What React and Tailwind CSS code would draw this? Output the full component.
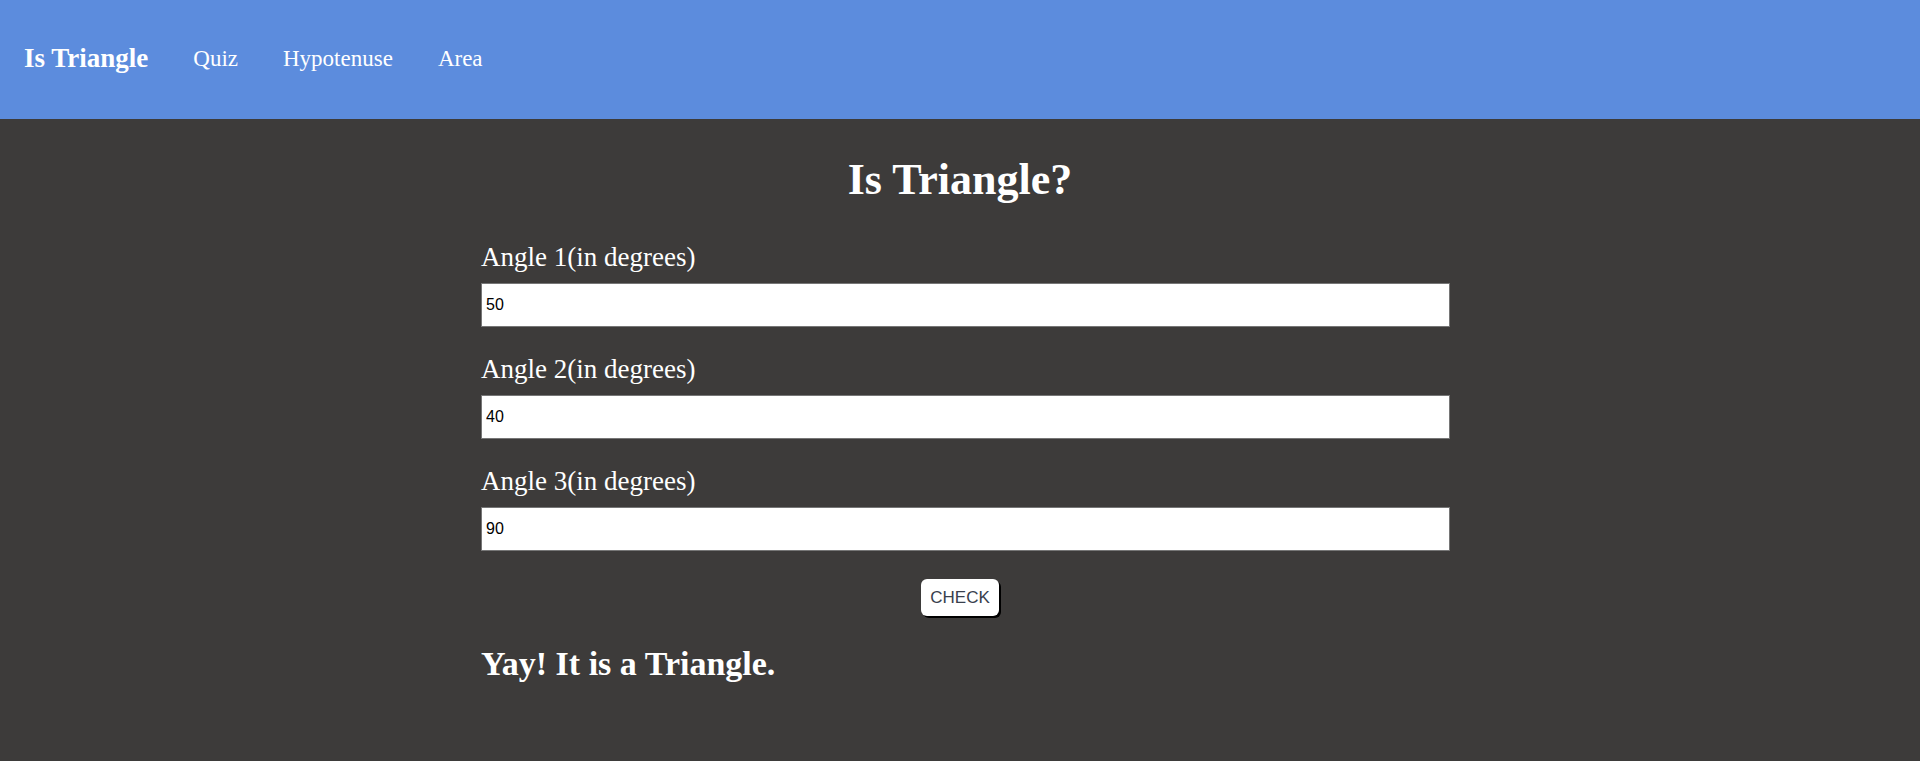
import { useState } from 'react';

const serif = { fontFamily: '"Liberation Serif", "Times New Roman", serif' };

function Field({ label, value, onChange }) {
  return (
    <div className="flex flex-col">
      <label className="text-[27px] leading-none text-white">{label}</label>
      <input
        type="text"
        value={value}
        onChange={(e) => onChange(e.target.value)}
        className="mt-[12px] h-[44px] w-full border border-[#767676] bg-white px-[4px] text-[16px] text-black outline-none [font-family:'Liberation_Sans',Arial,sans-serif]"
      />
    </div>
  );
}

export default function App() {
  const [angles, setAngles] = useState(['50', '40', '90']);
  const [result, setResult] = useState('Yay! It is a Triangle.');

  const setAngle = (i, v) => setAngles((prev) => prev.map((a, j) => (j === i ? v : a)));

  const check = () => {
    const sum = angles.reduce((s, a) => s + Number(a || 0), 0);
    setResult(sum === 180 ? 'Yay! It is a Triangle.' : 'Oops! Not a Triangle.');
  };

  return (
    <div className="min-h-screen bg-[#3d3b3a] text-white" style={serif}>
      {/* Navbar */}
      <nav className="flex h-[119px] items-center gap-[45px] bg-[#5c8cdd] px-[24px] pb-[2px]">
        <span className="text-[27px] font-bold leading-none">Is Triangle</span>
        <a className="text-[23px] leading-none">Quiz</a>
        <a className="text-[23px] leading-none">Hypotenuse</a>
        <a className="text-[23px] leading-none">Area</a>
      </nav>

      <h1 className="mt-[39px] text-center text-[44px] font-bold leading-none">Is Triangle?</h1>

      <div className="ml-[481px] mt-[42px] flex w-[969px] flex-col gap-[29px]">
        <Field label="Angle 1(in degrees)" value={angles[0]} onChange={(v) => setAngle(0, v)} />
        <Field label="Angle 2(in degrees)" value={angles[1]} onChange={(v) => setAngle(1, v)} />
        <Field label="Angle 3(in degrees)" value={angles[2]} onChange={(v) => setAngle(2, v)} />
      </div>

      <div className="mt-[28px] flex justify-center">
        <button
          onClick={check}
          className="h-[37px] rounded-[6px] bg-white px-[9px] text-[17px] leading-none text-[#39404d] shadow-[2px_2px_0_#000] [font-family:'Liberation_Sans',Arial,sans-serif]"
        >
          CHECK
        </button>
      </div>

      <h2 className="ml-[481px] mt-[31px] text-[34px] font-bold leading-none">{result}</h2>
    </div>
  );
}
